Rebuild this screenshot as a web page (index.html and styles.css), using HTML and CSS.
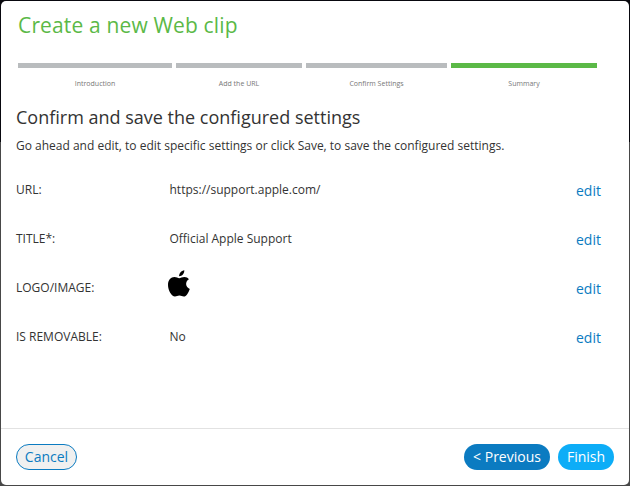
FILE: index.html
```
<!DOCTYPE html>
<html lang="en">
<head>
  <meta charset="UTF-8">
  <meta name="viewport" content="width=device-width, initial-scale=1.0">
  <title>Create a new Web clip</title>
  <link rel="stylesheet" href="styles.css">
</head>
<body>
  <div class="modal">
    <h1>Create a new Web clip</h1>

    <ul class="steps">
      <li>Introduction</li>
      <li>Add the URL</li>
      <li>Confirm Settings</li>
      <li class="active">Summary</li>
    </ul>

    <div class="content">
      <h2>Confirm and save the configured settings</h2>
      <p>Go ahead and edit, to edit specific settings or click Save, to save the configured settings.</p>

      <div class="row">
        <span class="label">URL:</span>
        <span class="value">https://support.apple.com/</span>
        <a class="edit">edit</a>
      </div>
      <div class="row">
        <span class="label">TITLE*:</span>
        <span class="value">Official Apple Support</span>
        <a class="edit">edit</a>
      </div>
      <div class="row">
        <span class="label">LOGO/IMAGE:</span>
        <span class="value">
          <svg class="logo" viewBox="0 0 22 27" width="22" height="27">
            <path d="M16.3 0.3c.2 3-2.2 6-5.2 6C10.9 3.5 13.4 0.7 16.3 0.3z"/>
            <path d="M20.9 9.3c-4.1 2.4-3.5 7.9 .9 9.6-1.3 3.6-3.5 7.6-6 7.6-1.7 0-2.4-1-4.4-1s-2.8 1-4.4 1C3.5 26.5 0 20.3 0 14.9 0 9.8 3 7 6.4 7c2 0 3.500 1.200 4.800 1.200C12.500 8.200 14.200 7 16.500 7c1.700 0 3.400 .9 4.400 2.300z"/>
          </svg>
        </span>
        <a class="edit">edit</a>
      </div>
      <div class="row">
        <span class="label">IS REMOVABLE:</span>
        <span class="value">No</span>
        <a class="edit">edit</a>
      </div>
    </div>

    <div class="footer">
      <button class="cancel">Cancel</button>
      <button class="previous">&lt; Previous</button>
      <button class="finish">Finish</button>
    </div>
  </div>
</body>
</html>
```
FILE: styles.css
```
* {
  box-sizing: border-box;
}

body {
  margin: 0;
  padding: 1px;
  height: 486px;
  overflow: hidden;
  font-family: "Open Sans", sans-serif;
  color: #333;
  background: linear-gradient(#08080e 142px, #484848 142px);
}

.modal {
  display: flex;
  flex-direction: column;
  height: 484px;
  background: #fff;
  border-radius: 5px;
}

h1, h2, p {
  margin: 0;
  font-weight: 400;
  white-space: nowrap;
}

h1 {
  padding: 9px 17px 0;
  font-size: 21px;
  font-weight: 370;
  letter-spacing: 0.15px;
  line-height: 30px;
  color: #5bb947;
}

/* Step bar */
.steps {
  display: grid;
  grid-template-columns: 154px 126px 141px 146px;
  gap: 4px;
  margin: 23px 0 0 17px;
  padding: 0;
  list-style: none;
}

.steps li {
  padding-top: 11px;
  border-top: 5px solid #b9bcbe;
  font-size: 7px;
  line-height: 10px;
  text-align: center;
  color: #777;
}

.steps .active {
  border-color: #5bb947;
}

.content {
  flex: 1;
  padding: 16px 15px 0;
}

h2 {
  font-size: 18px;
  line-height: 25px;
}

p {
  margin: 7px 0 11px;
  font-size: 12px;
  line-height: 17px;
}

.row {
  display: flex;
  align-items: center;
  height: 49px;
  font-size: 12px;
}

.label {
  width: 153.5px;
}

.value {
  flex: 1;
}

.logo {
  display: block;
  margin: -8px 0 0 -1.5px;
}

.edit {
  width: 38px;
  padding-top: 1px;
  font-size: 14px;
  color: #0b7bc1;
}

/* Buttons */
.footer {
  display: flex;
  align-items: center;
  gap: 8px;
  height: 57px;
  padding: 0 15px;
  border-top: 1px solid #e2e2e2;
}

button {
  height: 26px;
  padding: 0;
  border: 0;
  border-radius: 13px;
  font-family: inherit;
  font-size: 14px;
  line-height: 24px;
  color: #fff;
}

.cancel {
  width: 61px;
  margin-right: auto;
  border: 1px solid #0b7bc1;
  background: #f0f0f0;
  color: #0b7bc1;
}

.previous {
  width: 86px;
  background: #0b7bc1;
}

.finish {
  width: 56px;
  background: #0dadf7;
}
```
